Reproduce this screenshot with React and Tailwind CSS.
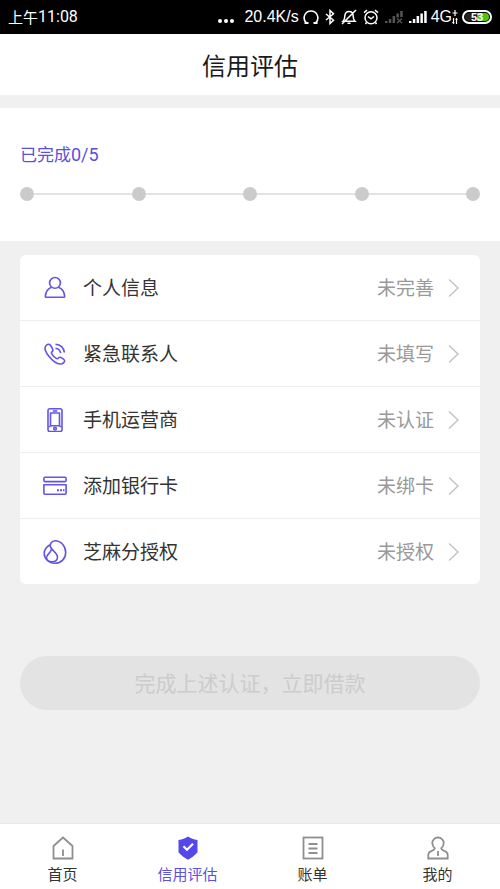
import React from 'react';

const CJK = "font-['Noto_Sans_CJK_SC',sans-serif]";

/* Status bar icons */

const Headphones = () => (
    <svg width="16" height="16" viewBox="0 0 16 16" fill="none" stroke="currentColor" strokeWidth="1.6">
        <path d="M3 13.5C.8 11 1 7.500 2 5.500 3.200 3.200 5.500 2 8 2s4.800 1.200 6 3.500c1 2 1.200 5.500-1 8" />
        <path d="M1.500 14h4M10.500 14h4" strokeWidth="2" />
    </svg>
);

const Bluetooth = () => (
    <svg width="10" height="16" viewBox="0 0 10 16" fill="none" stroke="currentColor" strokeWidth="1.5">
        <path d="M1 5l7.5 6.2L5 14.5v-13l3.5 3.3L1 11" />
    </svg>
);

const BellOff = () => (
    <svg width="16" height="16" viewBox="0 0 16 16" fill="none" stroke="currentColor" strokeWidth="1.5">
        <path d="M2 12.2h12c-1.300-1.200-1.800-2.500-1.800-5C12.200 4.200 10.500 2.500 8 2.500S3.800 4.200 3.800 7.200c0 2.500-.5 3.800-1.800 5zM6.500 14.300h3M15 1L1 15" />
    </svg>
);

const Alarm = () => (
    <svg width="16" height="16" viewBox="0 0 16 16" fill="none" stroke="currentColor" strokeWidth="1.5">
        <circle cx="8" cy="8.7" r="6" />
        <path d="M5 7.500l3 2.300 3-2.300M1 3.700l3-2.500M15 3.700l-3-2.500M3.500 13.500L2.500 15M12.500 13.500l1 1.500" />
    </svg>
);

const Signal = ({ off }) => (
    <svg width="18" height="14" viewBox="0 0 18 14" fill={off ? '#555' : '#fff'}>
        <rect x="0" y="11" width="2.5" height="2" />
        <rect x="3.8" y="9" width="2.5" height="4" />
        <rect x="7.6" y="6" width="2.5" height="7" />
        <rect x="11.4" y="3.5" width="2.5" height={off ? 4 : 9.5} />
        <rect x="15.2" y="1" width="2.5" height={off ? 6 : 12} />
        {off && <path d="M12 8.500l5 4.500M17 8.500l-5 4.500" stroke="#555" strokeWidth="1.3" />}
    </svg>
);

const DataArrows = () => (
    <svg width="6" height="16" viewBox="0 0 6 16" fill="none" stroke="currentColor" strokeWidth="1.2">
        <path d="M3 1v6M.5 4h5M1.500 9v6M.3 13.500h2M4.500 15V9M3.500 10.500h2" />
    </svg>
);

const Battery = () => (
    <div className="ml-1 flex h-[14px] w-[30px] items-center rounded-full border-2 border-white p-px">
        <div className="flex h-full w-full items-center justify-center rounded-full bg-[linear-gradient(90deg,#222_50%,#4cc417_50%)] font-['Liberation_Sans',sans-serif] text-[11px] leading-none font-bold">
            53
        </div>
    </div>
);

/* List icons */

const PersonIcon = () => (
    <>
        <circle cx="12" cy="6.9" r="5.4" />
        <path d="M8.500 11.300C5 12.500 2.800 15.500 2.300 20.400c0 .6.3.9.9.9h17.600c.6 0 .9-.3.9-.9-.5-4.900-2.700-7.900-6.200-9.100" />
    </>
);

const PhoneIcon = () => (
    <>
        <path d="M3.500 3.200C1.200 5 1.800 9 5.500 13.800c4.500 5.600 10 9 13.500 8 1.300-.5 2.800-2.200 2.600-3.200-.2-1.200-3.800-3.600-5-3.400-1 .2-1.400 1.800-2.500 1.600-2-.6-5-3.600-5.700-5.700-.2-1.200 1.400-1.500 1.500-2.700C10 7 7.800 3.300 6.500 2.500c-1-.5-2.200 0-3 .7z" />
        <path d="M12.500 2.300c4.700.4 8.200 3.600 9 8.200M12.500 6.200c2.800.4 4.700 2.200 5.200 5" />
    </>
);

const MobileIcon = () => (
    <>
        <rect x="5" y="0.8" width="14" height="22.8" rx="2" />
        <rect x="7.5" y="5" width="9" height="12.8" />
        <path d="M9.800 3h4.400" />
        <circle cx="12" cy="20.7" r="1.3" />
        <path d="M5.500 18.500h2M16.500 18.500h2" />
    </>
);

const CardIcon = () => (
    <>
        <rect x="0.9" y="3.2" width="22.2" height="4.4" rx="1" />
        <path d="M.9 10.700h22.200v8.500a1 1 0 0 1-1 1H1.900a1 1 0 0 1-1-1z" />
        <path d="M14 16.300h2M17 16.300h2M20 16.300h1.500" strokeWidth="2" />
    </>
);

const SesameIcon = () => (
    <>
        <path d="M12 .8C18 .8 22.700 6 22.700 12.500c0 6-4.500 10.700-10.700 10.700S1.200 18.500 1.200 13.500C1.200 9.500 3.500 6.800 7 4.800" />
        <path d="M12 .8C8.500 1 6.800 3.800 7.300 6.500 8 10 14.500 12.500 14.500 17c0 3-2.300 4.800-5.500 4.800S3.500 20 3.500 17.500C3.500 14.500 7.500 13.500 8.300 9.500" />
    </>
);

/* Tab icons */

const HomeIcon = () => (
    <>
        <path d="M2.500 10L12 1.500 21.500 10v12.500h-19z" />
        <path d="M12 13.500V20" />
    </>
);

const ShieldIcon = () => (
    <>
        <path d="M12 .5c2.800 2 5.600 3 9.500 3.500v12.300c-2.700 3-6 5.500-9.500 7.500-3.500-2-6.800-4.500-9.500-7.500V4C6.400 3.500 9.200 2.500 12 .5z" fill="currentColor" stroke="none" />
        <path d="M7.500 10.300l3.500 3.500 6-6" stroke="#fff" strokeWidth="2.2" />
    </>
);

const BillIcon = () => (
    <>
        <rect x="2.5" y="1.5" width="19" height="21" />
        <path d="M7.500 8h9M7.500 12.500h9M7.500 17h9" />
    </>
);

const MineIcon = () => (
    <>
        <path d="M8.800 12.300C7 10.800 6.300 9 6.300 7A5.600 5.600 0 0 1 12 1.500 5.600 5.600 0 0 1 17.700 7c0 2-.7 3.800-2.500 5.300 0 1.200.8 1.700 2.500 2.400 2.800 1 4 2.200 4 4.300v3.500H2.300V19c0-2.100 1.200-3.300 4-4.300 1.700-.7 2.500-1.200 2.500-2.400z" />
        <path d="M12 15v5" />
    </>
);

const items = [
    { label: '个人信息', status: '未完善', icon: PersonIcon },
    { label: '紧急联系人', status: '未填写', icon: PhoneIcon },
    { label: '手机运营商', status: '未认证', icon: MobileIcon },
    { label: '添加银行卡', status: '未绑卡', icon: CardIcon },
    { label: '芝麻分授权', status: '未授权', icon: SesameIcon },
];

const tabs = [
    { label: '首页', icon: HomeIcon },
    { label: '信用评估', icon: ShieldIcon, active: true },
    { label: '账单', icon: BillIcon },
    { label: '我的', icon: MineIcon },
];

const StatusBar = () => (
    <div className="flex h-[34px] items-center justify-between bg-black px-2 text-white">
        <div className="flex items-center text-base">
            <span className="text-[15px]">上午</span>
            <span className="font-[Roboto,sans-serif]">11:08</span>
        </div>
        <div className="flex items-center font-['Liberation_Sans',sans-serif] text-base">
            <svg width="16" height="16" viewBox="0 0 16 16" fill="currentColor">
                <circle cx="2" cy="12" r="2" />
                <circle cx="8" cy="12" r="2" />
                <circle cx="14" cy="12" r="2" />
            </svg>
            <span className="ml-2.5">20.4K/s</span>
            <div className="ml-1 flex items-center gap-1.5">
                <Headphones />
                <Bluetooth />
                <BellOff />
                <Alarm />
                <Signal off />
                <Signal />
            </div>
            <span className="ml-1">4G</span>
            <DataArrows />
            <Battery />
        </div>
    </div>
);

const Progress = () => (
    <section className="mt-[13px] h-[133px] bg-white px-5 pt-8">
        <p className="text-[17px] leading-7 text-[#5b4fe0]">
            已完成<span className="font-[Roboto,sans-serif] text-lg leading-7">0/5</span>
        </p>
        <div className="mt-[18px] flex items-center">
            {items.map((item, i) => (
                <React.Fragment key={item.label}>
                    {i > 0 && <div className="h-0.5 flex-1 bg-[#e2e2e2]" />}
                    <div className="size-[14px] rounded-full bg-[#cbcbcb]" />
                </React.Fragment>
            ))}
        </div>
    </section>
);

const App = () => {
    return (
        <div className={`${CJK} flex min-h-screen flex-col bg-[#f0f0f0]`}>
            <StatusBar />
            <header className="flex h-[61px] items-center justify-center bg-white">
                <h1 className="text-2xl text-[#1a1a1a]">信用评估</h1>
            </header>

            <main className="flex-1">
                <Progress />

                <ul className="mx-5 mt-[14px] divide-y divide-[#eeeeee] rounded-md bg-white">
                    {items.map(({ label, status, icon: Icon }) => (
                        <li key={label}>
                            <button className="flex h-[65px] w-full items-center pr-5 pl-[23px] text-[19px]">
                                <svg width="24" height="24" viewBox="0 0 24 24" fill="none" stroke="#6254e8" strokeWidth="1.6" strokeLinejoin="round">
                                    <Icon />
                                </svg>
                                <span className="ml-4 text-[#333]">{label}</span>
                                <span className="ml-auto text-[#999]">{status}</span>
                                <svg className="ml-3.5" width="12" height="20" viewBox="0 0 12 20" fill="none" stroke="#c4c4c4" strokeWidth="1.5">
                                    <path d="M1 1.500L10 10l-9 8.500" />
                                </svg>
                            </button>
                        </li>
                    ))}
                </ul>

                <div className="mx-5 mt-[72px] mb-6">
                    <button disabled className="h-[54px] w-full rounded-full bg-[#e3e3e3] text-[21px] text-[#cccccc]">
                        完成上述认证，立即借款
                    </button>
                </div>
            </main>

            <nav className="grid h-[66px] grid-cols-4 border-t border-[#e8e8e8] bg-white">
                {tabs.map(({ label, icon: Icon, active }) => (
                    <a
                        key={label}
                        href="#"
                        className={`flex flex-col items-center pt-3 text-[15px] leading-6 ${active ? 'text-[#5b4fe0]' : 'text-[#333]'}`}
                    >
                        <svg width="24" height="24" viewBox="0 0 24 24" fill="none" stroke="#8f8f8f" strokeWidth="1.8" className={active ? 'text-[#5448e8]' : ''}>
                            <Icon />
                        </svg>
                        <span className="mt-0.5">{label}</span>
                    </a>
                ))}
            </nav>
        </div>
    );
};

export default App;
